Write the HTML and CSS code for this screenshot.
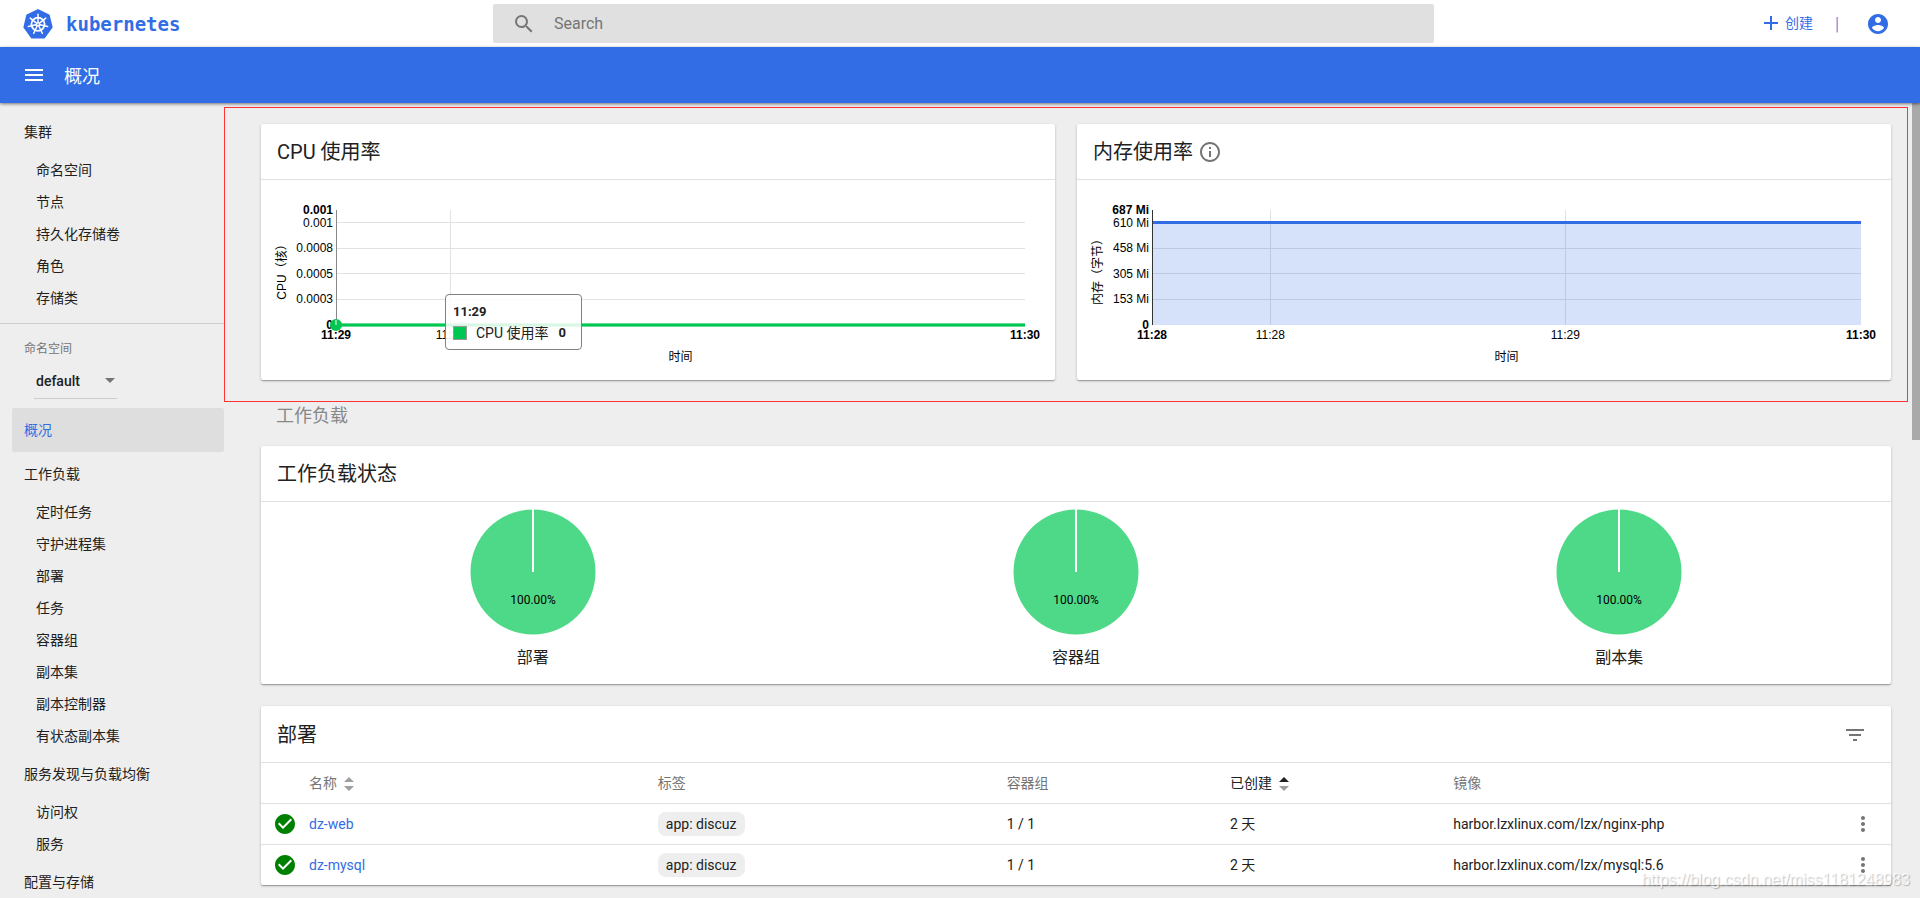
FILE: index.html
```html
<!DOCTYPE html>
<html lang="zh-CN">
<head>
<meta charset="utf-8">
<title>概况 - Kubernetes Dashboard</title>
<link rel="stylesheet" href="styles.css">
</head>
<body>
<header class="topbar">
  <a class="brand" href="#">
    <svg class="brand-logo" viewBox="0 0 30 30" aria-hidden="true">
      <path fill="#326de6" stroke="#326de6" stroke-width="2" stroke-linejoin="round" d="M15 1.2 25.8 6.4 28.6 18.2 21 28.6H9L1.4 18.2 4.2 6.4z"/>
      <g fill="none" stroke="#fff" stroke-width="1.5" stroke-linecap="round">
        <circle cx="15" cy="15.3" r="6.6" stroke-width="1.8"/>
        <path d="M15 5.3v8.4M15 15.3l6.800-5.400 1-.8M15 15.3l9.600 2.200M15 15.3l4.300 9M15 15.3l-4.300 9M15 15.3l-9.600 2.200M15 15.3 8.200 9.900l-1-.8"/>
      </g>
      <circle cx="15" cy="15.3" r="2" fill="#fff"/><circle cx="15" cy="15.3" r=".8" fill="#326de6"/>
    </svg>
    <span>kubernetes</span>
  </a>
  <label class="search">
    <svg class="icon" viewBox="0 0 24 24" aria-hidden="true"><path d="M15.5 14h-.79l-.28-.27A6.471 6.471 0 0 0 16 9.5 6.5 6.5 0 1 0 9.5 16c1.61 0 3.09-.59 4.23-1.57l.27.28v.79l5 4.99L20.49 19l-4.99-5zm-6 0C7.01 14 5 11.99 5 9.5S7.01 5 9.5 5 14 7.01 14 9.5 11.99 14 9.5 14z"/></svg>
    <input type="search" placeholder="Search" aria-label="Search">
  </label>
  <div class="actions">
    <button class="create" type="button">
      <svg viewBox="0 0 16 16" aria-hidden="true"><path d="M8 1v14M1 8h14" stroke="currentColor" stroke-width="2"/></svg>
      创建
    </button>
    <span class="separator">|</span>
    <button class="account" type="button" aria-label="账户">
      <svg class="icon" viewBox="0 0 24 24"><path d="M12 2C6.48 2 2 6.48 2 12s4.48 10 10 10 10-4.48 10-10S17.52 2 12 2zm0 3c1.66 0 3 1.34 3 3s-1.34 3-3 3-3-1.34-3-3 1.34-3 3-3zm0 14.2c-2.5 0-4.71-1.28-6-3.22.03-1.99 4-3.08 6-3.08 1.99 0 5.97 1.09 6 3.08-1.29 1.94-3.5 3.22-6 3.22z"/></svg>
    </button>
  </div>
</header>

<div class="toolbar">
  <button class="menu" type="button" aria-label="菜单">
    <svg class="icon" viewBox="0 0 24 24"><path d="M3 18h18v-2H3v2zm0-5h18v-2H3v2zm0-7v2h18V6H3z"/></svg>
  </button>
  <h1>概况</h1>
</div>

<div class="shell">
  <nav class="sidebar">
    <a class="group" href="#">集群</a>
    <a class="item" href="#">命名空间</a>
    <a class="item" href="#">节点</a>
    <a class="item" href="#">持久化存储卷</a>
    <a class="item" href="#">角色</a>
    <a class="item" href="#">存储类</a>
    <div class="namespace">
      <label for="ns">命名空间</label>
      <div class="select">
        <select id="ns"><option>default</option></select>
        <svg viewBox="0 0 10 5" aria-hidden="true"><path d="M0 0h10L5 5z" fill="#757575"/></svg>
      </div>
    </div>
    <a class="group current" href="#">概况</a>
    <a class="group" href="#">工作负载</a>
    <a class="item" href="#">定时任务</a>
    <a class="item" href="#">守护进程集</a>
    <a class="item" href="#">部署</a>
    <a class="item" href="#">任务</a>
    <a class="item" href="#">容器组</a>
    <a class="item" href="#">副本集</a>
    <a class="item" href="#">副本控制器</a>
    <a class="item" href="#">有状态副本集</a>
    <a class="group" href="#">服务发现与负载均衡</a>
    <a class="item" href="#">访问权</a>
    <a class="item" href="#">服务</a>
    <a class="group" href="#">配置与存储</a>
  </nav>

  <main class="content">
    <section class="metrics">
      <article class="card">
        <h2 class="card-title">CPU 使用率</h2>
        <div class="chart">
          <svg class="plot" role="img" aria-label="CPU 使用率">
            <g class="grid">
              <line x1="0" x2="100%" y1="12" y2="12"/><line x1="0" x2="100%" y1="38" y2="38"/>
              <line x1="0" x2="100%" y1="63" y2="63"/><line x1="0" x2="100%" y1="89" y2="89"/>
              <line x1="16.600%" x2="16.600%" y1="0" y2="115"/>
            </g>
            <line class="axis soft" x1="0" x2="0" y1="0" y2="115"/>
            <g class="ticks-y">
              <text class="strong" x="-3" y="4">0.001</text><text x="-3" y="17">0.001</text>
              <text x="-3" y="42">0.0008</text><text x="-3" y="68">0.0005</text>
              <text x="-3" y="93">0.0003</text><text class="strong" x="-3" y="119">0</text>
            </g>
            <line class="cpu-halo" x1="0" x2="100%" y1="115" y2="115"/>
            <line class="cpu-line" x1="0" x2="100%" y1="115" y2="115"/>
            <circle class="cpu-dot" cx="0" cy="115" r="6"/>
            <line class="guide" x1="0" x2="0" y1="110" y2="115"/>
            <g class="ticks-x">
              <text class="strong" x="0" y="129">11:29</text><text x="16.600%" y="129">11:29</text>
              <text class="strong" x="100%" y="129">11:30</text><text x="50%" y="151">时间</text>
              <text transform="translate(-50 59) rotate(-90)">CPU（核）</text>
            </g>
          </svg>
          <div class="tooltip">
            <strong>11:29</strong>
            <div class="tooltip-row"><i class="swatch"></i><span>CPU 使用率</span><b>0</b></div>
          </div>
        </div>
      </article>
      <article class="card">
        <h2 class="card-title">内存使用率
          <svg class="icon" viewBox="0 0 24 24" aria-hidden="true"><path d="M11 17h2v-6h-2v6zm1-15C6.48 2 2 6.48 2 12s4.48 10 10 10 10-4.48 10-10S17.52 2 12 2zm0 18c-4.41 0-8-3.59-8-8s3.59-8 8-8 8 3.59 8 8-3.59 8-8 8zM11 9h2V7h-2v2z"/></svg>
        </h2>
        <div class="chart">
          <svg class="plot" role="img" aria-label="内存使用率">
            <g class="grid">
              <line x1="0" x2="100%" y1="38" y2="38"/><line x1="0" x2="100%" y1="63" y2="63"/>
              <line x1="0" x2="100%" y1="89" y2="89"/>
              <line x1="16.7%" x2="16.7%" y1="0" y2="115"/><line x1="58.3%" x2="58.3%" y1="0" y2="115"/>
            </g>
            <rect class="mem-area" x="0" y="12" width="100%" height="103"/>
            <line class="mem-line" x1="0" x2="100%" y1="12" y2="12"/>
            <line class="axis" x1="0" x2="0" y1="0" y2="115"/>
            <g class="ticks-y">
              <text class="strong" x="-3" y="4">687 Mi</text><text x="-3" y="17">610 Mi</text>
              <text x="-3" y="42">458 Mi</text><text x="-3" y="68">305 Mi</text>
              <text x="-3" y="93">153 Mi</text><text class="strong" x="-3" y="119">0</text>
            </g>
            <g class="ticks-x">
              <text class="strong" x="0" y="129">11:28</text><text x="16.7%" y="129">11:28</text>
              <text x="58.3%" y="129">11:29</text>
              <text class="strong" x="100%" y="129">11:30</text><text x="50%" y="151">时间</text>
              <text transform="translate(-50 59) rotate(-90)">内存（字节）</text>
            </g>
          </svg>
        </div>
      </article>
    </section>

    <section class="workloads">
      <h2 class="section-title">工作负载</h2>
      <article class="card">
        <h3 class="card-title">工作负载状态</h3>
        <div class="pies">
          <figure>
            <svg viewBox="0 0 126 126"><circle cx="63" cy="63" r="62.5"/><line x1="63" x2="63" y1="0" y2="63"/><text x="63" y="95">100.00%</text></svg>
            <figcaption>部署</figcaption>
          </figure>
          <figure>
            <svg viewBox="0 0 126 126"><circle cx="63" cy="63" r="62.5"/><line x1="63" x2="63" y1="0" y2="63"/><text x="63" y="95">100.00%</text></svg>
            <figcaption>容器组</figcaption>
          </figure>
          <figure>
            <svg viewBox="0 0 126 126"><circle cx="63" cy="63" r="62.5"/><line x1="63" x2="63" y1="0" y2="63"/><text x="63" y="95">100.00%</text></svg>
            <figcaption>副本集</figcaption>
          </figure>
        </div>
      </article>

      <article class="card">
        <div class="card-title list-title">
          <h3>部署</h3>
          <button type="button" aria-label="筛选">
            <svg class="icon" viewBox="0 0 24 24"><path d="M10 18h4v-2h-4v2zM3 6v2h18V6H3zm3 7h12v-2H6v2z"/></svg>
          </button>
        </div>
        <table>
          <colgroup><col class="c-status"><col class="c-name"><col class="c-labels"><col class="c-pods"><col class="c-age"><col><col class="c-menu"></colgroup>
          <thead>
            <tr>
              <th></th>
              <th>名称 <svg class="sort" viewBox="0 0 10 14"><path d="M0 5h10L5 0zM0 9h10l-5 5z" fill="#9e9e9e"/></svg></th>
              <th>标签</th>
              <th>容器组</th>
              <th class="sorted">已创建 <svg class="sort" viewBox="0 0 10 14"><path d="M0 5h10L5 0z" fill="#212121"/><path d="M0 9h10l-5 5z" fill="#9e9e9e"/></svg></th>
              <th>镜像</th>
              <th></th>
            </tr>
          </thead>
          <tbody>
            <tr>
              <td><svg class="icon ok" viewBox="0 0 24 24"><path d="M12 2C6.48 2 2 6.48 2 12s4.48 10 10 10 10-4.48 10-10S17.52 2 12 2zm-2 15-5-5 1.41-1.41L10 14.17l7.59-7.59L19 8l-9 9z"/></svg></td>
              <td><a href="#">dz-web</a></td>
              <td><span class="chip">app: discuz</span></td>
              <td>1 / 1</td>
              <td>2 天</td>
              <td>harbor.lzxlinux.com/lzx/nginx-php</td>
              <td><button type="button" aria-label="操作"><svg class="icon" viewBox="0 0 24 24"><path d="M12 8c1.1 0 2-.9 2-2s-.9-2-2-2-2 .9-2 2 .9 2 2 2zm0 2c-1.1 0-2 .9-2 2s.9 2 2 2 2-.9 2-2-.9-2-2-2zm0 6c-1.1 0-2 .9-2 2s.9 2 2 2 2-.9 2-2-.9-2-2-2z"/></svg></button></td>
            </tr>
            <tr>
              <td><svg class="icon ok" viewBox="0 0 24 24"><path d="M12 2C6.48 2 2 6.48 2 12s4.48 10 10 10 10-4.48 10-10S17.52 2 12 2zm-2 15-5-5 1.41-1.41L10 14.17l7.59-7.59L19 8l-9 9z"/></svg></td>
              <td><a href="#">dz-mysql</a></td>
              <td><span class="chip">app: discuz</span></td>
              <td>1 / 1</td>
              <td>2 天</td>
              <td>harbor.lzxlinux.com/lzx/mysql:5.6</td>
              <td><button type="button" aria-label="操作"><svg class="icon" viewBox="0 0 24 24"><path d="M12 8c1.1 0 2-.9 2-2s-.9-2-2-2-2 .9-2 2 .9 2 2 2zm0 2c-1.1 0-2 .9-2 2s.9 2 2 2 2-.9 2-2-.9-2-2-2zm0 6c-1.1 0-2 .9-2 2s.9 2 2 2 2-.9 2-2-.9-2-2-2z"/></svg></button></td>
            </tr>
          </tbody>
        </table>
      </article>
    </section>
  </main>
  <div class="scrollbar"><div class="scroll-thumb"></div></div>
</div>
<div class="watermark">https://blog.csdn.net/miss1181248983</div>
</body>
</html>
```
FILE: styles.css
```css
* { box-sizing: border-box; }

body {
  margin: 0;
  height: 100vh;
  display: flex;
  flex-direction: column;
  overflow: hidden;
  background: #eee;
  color: #212121;
  font: 14px/20px Roboto, "Noto Sans CJK SC", sans-serif;
}

a { color: inherit; text-decoration: none; }
h1, h2, h3, figure { margin: 0; font-weight: 400; }
button {
  padding: 0;
  border: 0;
  background: none;
  color: inherit;
  font: inherit;
  display: inline-flex;
  align-items: center;
}
.icon { width: 24px; height: 24px; fill: currentColor; flex: none; display: block; }

/* Top bar */
.topbar {
  flex: none;
  height: 47px;
  display: grid;
  grid-template-columns: 493fr 941fr 486fr;
  align-items: center;
  background: #fff;
}
.brand {
  display: flex;
  align-items: center;
  gap: 13px;
  padding-left: 23px;
  color: #326de6;
  font: bold 19px/24px "DejaVu Sans Mono", monospace;
}
.brand-logo { width: 30px; height: 30px; }
.search {
  height: 39px;
  display: flex;
  align-items: center;
  gap: 18px;
  padding-left: 19px;
  background: #e0e0e0;
  border-radius: 2px;
  color: #757575;
}
.search input {
  flex: 1;
  padding: 0;
  border: 0;
  outline: 0;
  background: none;
  color: #212121;
  font: 16px/24px Roboto, "Noto Sans CJK SC", sans-serif;
}
.search input::placeholder { color: #757575; opacity: 1; }
.actions {
  display: flex;
  justify-content: flex-end;
  align-items: center;
  padding-right: 30px;
  color: #326de6;
}
.create { gap: 6px; padding-bottom: 2px; }
.create svg { width: 16px; height: 16px; }
.separator { margin: 0 27px 0 22px; font-size: 18px; font-weight: 300; }

/* Title bar */
.toolbar {
  flex: none;
  height: 56px;
  display: flex;
  align-items: center;
  gap: 18px;
  padding-left: 22px;
  background: #326de6;
  color: #fff;
  box-shadow: 0 1px 3px rgba(0, 0, 0, .5);
  z-index: 1;
}
.toolbar h1 { padding-top: 3px; font-size: 18px; line-height: 24px; }

.shell { flex: 1; min-height: 0; display: flex; }

/* Navigation */
.sidebar { flex: none; width: 224px; padding-top: 7px; overflow: hidden; }
.sidebar a { display: flex; align-items: center; }
.group { height: 44px; padding-left: 24px; }
.item { height: 32px; padding-left: 36px; }
.group.current {
  margin-left: 12px;
  padding-left: 12px;
  background: #dedede;
  border-radius: 2px;
  color: #326de6;
}
.namespace { margin-top: 9px; padding: 15px 24px 9px; border-top: 1px solid #ccc; }
.namespace label { display: block; font-size: 12px; color: #757575; }
.select {
  width: 83px;
  height: 40px;
  margin-left: 10px;
  padding: 4px 2px 0;
  display: flex;
  align-items: center;
  border-bottom: 1px solid #ccc;
}
.select select {
  flex: 1;
  min-width: 0;
  padding: 0;
  border: 0;
  appearance: none;
  background: none;
  color: #212121;
  font: 500 14px/20px Roboto, sans-serif;
}
.select svg { width: 10px; height: 5px; }

/* Content */
.content { flex: 1; min-width: 0; overflow: hidden; }
.metrics {
  display: grid;
  grid-template-columns: 794fr 814fr;
  gap: 22px;
  margin: 4px 4px 0 0;
  padding: 16px 16px 21px 36px;
  border: 1px solid #f33;
}
.workloads {
  display: flex;
  flex-direction: column;
  gap: 22px;
  padding: 0 21px 22px 37px;
}
.section-title {
  margin-bottom: -4px;
  padding: 2px 0 0 15px;
  font-size: 18px;
  line-height: 24px;
  color: #888;
}
.card {
  background: #fff;
  border-radius: 2px;
  box-shadow: 0 1px 3px rgba(0, 0, 0, .2), 0 1px 1px rgba(0, 0, 0, .14), 0 2px 1px -1px rgba(0, 0, 0, .12);
}
.card-title {
  height: 56px;
  display: flex;
  align-items: center;
  gap: 5px;
  padding: 1px 16px 0;
  border-bottom: 1px solid #e0e0e0;
  font-size: 20px;
  line-height: 28px;
}
.card-title .icon { color: #757575; }

/* Line charts */
.chart { position: relative; margin: 30px 30px 55px 75px; }
.plot { display: block; width: 100%; height: 115px; overflow: visible; }
.plot text { font: 12px "Liberation Sans", "Noto Sans CJK SC", sans-serif; fill: #000; }
.plot text.strong { font-weight: bold; }
.plot line { shape-rendering: crispEdges; }
.ticks-y text { text-anchor: end; }
.ticks-x text { text-anchor: middle; }
.grid line { stroke: #e2e2e2; }
.axis { stroke: #333; }
.axis.soft { stroke: #888; }
.guide { stroke: #7fe0a6; stroke-width: 2px; }
.cpu-halo { stroke: #66dd94; stroke-width: 4px; }
.cpu-line { stroke: #00c752; stroke-width: 2px; }
.cpu-dot { fill: #00c752; }
.mem-area { fill: #326de6; fill-opacity: .2; }
.mem-line { stroke: #326de6; stroke-width: 3px; }

.tooltip {
  position: absolute;
  left: 109px;
  top: 84px;
  padding: 6px 15px 6px 7px;
  background: rgba(255, 255, 255, .85);
  border: 1px solid #808080;
  border-radius: 4px;
}
.tooltip strong { display: block; font-size: 13px; font-weight: 700; line-height: 22px; }
.tooltip-row { display: flex; align-items: center; }
.tooltip-row b { margin-left: 10px; font-size: 13px; font-weight: 700; }
.swatch { width: 14px; height: 14px; margin-right: 9px; background: #00c752; border: 1px solid #999; }

/* Pie charts */
.pies { display: grid; grid-template-columns: repeat(3, 1fr); padding: 7px 0 14px; }
.pies figure { display: flex; flex-direction: column; align-items: center; gap: 11px; }
.pies svg { width: 126px; height: 126px; }
.pies circle { fill: #4dd987; }
.pies line { stroke: #fff; stroke-width: 2px; }
.pies text { font: 12px Roboto, sans-serif; text-anchor: middle; }
.pies figcaption { font-size: 16px; line-height: 24px; }

/* Resource list */
.list-title { height: 57px; justify-content: space-between; padding-right: 24px; }
.list-title h3 { font-size: 20px; }
table { width: 100%; table-layout: fixed; border-collapse: separate; border-spacing: 0; }
th, td { height: 41px; padding: 0; text-align: left; border-bottom: 1px solid #e0e0e0; }
tbody tr:last-child td { height: 40px; border-bottom: 0; }
th { font-weight: 400; color: #757575; }
th.sorted { color: #212121; }
td a { color: #326de6; }
.c-status { width: 48px; }
.c-name, .c-labels { width: 21.4%; }
.c-pods, .c-age { width: 13.7%; }
.c-menu { width: 56px; }
.sort { width: 10px; height: 14px; margin-left: 4px; vertical-align: middle; }
.ok { margin-left: 12px; color: green; }
td button { display: flex; margin-left: 16px; color: #757575; }
.chip {
  display: inline-block;
  padding: 2px 8px;
  background: #eee;
  border-radius: 8px;
}

/* Scroll indicator */
.scrollbar { flex: none; width: 8px; }
.scroll-thumb { height: 42.4%; background: #a9a9a9; }

.watermark {
  position: absolute;
  right: 10px;
  bottom: 8px;
  font-family: "Liberation Sans", sans-serif;
  font-size: 16px;
  color: rgba(255, 255, 255, .8);
  text-shadow: 1px 1px 1px rgba(0, 0, 0, .25);
}
```
